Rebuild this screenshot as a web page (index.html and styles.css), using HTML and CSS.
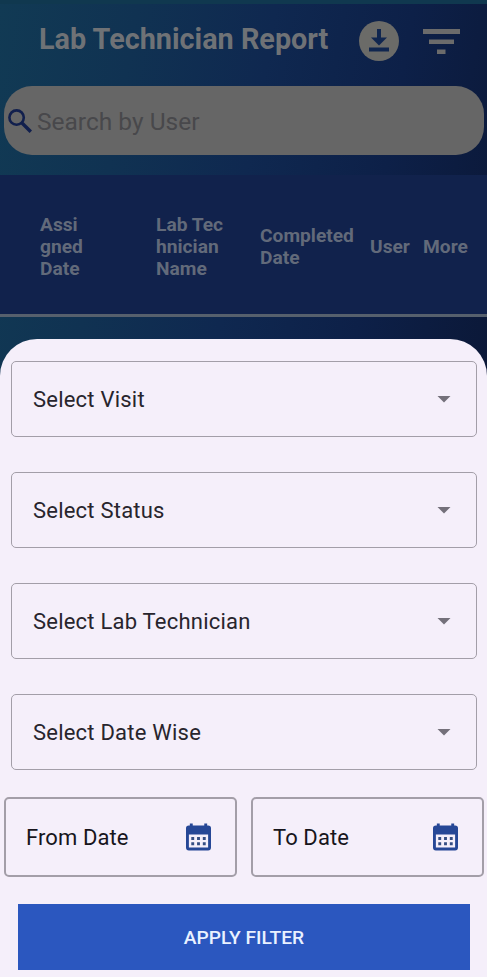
FILE: index.html
```html
<!DOCTYPE html>
<html lang="en">
<head>
<meta charset="utf-8">
<title>Lab Technician Report</title>
<link rel="stylesheet" href="styles.css">
</head>
<body>
<div class="app">
  <header class="header">
    <h1 class="title"><span>Lab Technician Report</span></h1>
    <svg class="download" viewBox="0 0 40 40"><circle cx="20" cy="20" r="20" fill="#6b6b68"/><path d="M18 8h4v8.500h6L20 24.500 12 16.500h6zM10 26.500h20v4H10z" fill="#10264f"/></svg>
    <svg class="filter" viewBox="0 0 37 26"><path d="M0 0h37v5H0zM6 10.500h25v4.500H6zM14 20.500h8.500v4.500H14z" fill="#6b6b6b"/></svg>
  </header>
  <div class="search">
    <svg class="lens" viewBox="0 0 24 24"><circle cx="8.600" cy="8.600" r="7.200" fill="none" stroke="#111f4d" stroke-width="2.600"/><path d="M14 14l8.800 8.800" stroke="#111f4d" stroke-width="3.400"/></svg>
    <span class="placeholder">Search by User</span>
  </div>
  <div class="table-head">
    <span>Assi<br>gned<br>Date</span>
    <span>Lab Tec<br>hnician<br>Name</span>
    <span>Completed<br>Date</span>
    <span>User</span>
    <span>More</span>
  </div>
  <main class="sheet">
    <div class="selects">
      <div class="select"><span>Select Visit</span><i class="caret"></i></div>
      <div class="select"><span>Select Status</span><i class="caret"></i></div>
      <div class="select"><span>Select Lab Technician</span><i class="caret"></i></div>
      <div class="select"><span>Select Date Wise</span><i class="caret"></i></div>
    </div>
    <div class="dates">
      <div class="date"><span>From Date</span>
        <svg class="calendar" viewBox="0 0 26 28"><path fill-rule="evenodd" fill="#264796" d="M4 0h3v2h12V0h3v2h1a3 3 0 0 1 3 3v20a3 3 0 0 1-3 3H3a3 3 0 0 1-3-3V5a3 3 0 0 1 3-3h1zM3 11.500V25h20V11.500z"/><path fill="#354d83" d="M5.500 14h3v3h-3zm6 0h3v3h-3zm6 0h3v3h-3zM5.500 19.500h3v3h-3zm6 0h3v3h-3zm6 0h3v3h-3z"/></svg>
      </div>
      <div class="date"><span>To Date</span>
        <svg class="calendar" viewBox="0 0 26 28"><path fill-rule="evenodd" fill="#264796" d="M4 0h3v2h12V0h3v2h1a3 3 0 0 1 3 3v20a3 3 0 0 1-3 3H3a3 3 0 0 1-3-3V5a3 3 0 0 1 3-3h1zM3 11.500V25h20V11.500z"/><path fill="#354d83" d="M5.500 14h3v3h-3zm6 0h3v3h-3zm6 0h3v3h-3zM5.500 19.500h3v3h-3zm6 0h3v3h-3zm6 0h3v3h-3z"/></svg>
      </div>
    </div>
    <button class="apply">APPLY FILTER</button>
  </main>
</div>
</body>
</html>
```
FILE: styles.css
```css
* { box-sizing: border-box; }
body { margin: 0; font-family: Roboto, "Liberation Sans", sans-serif; }
svg { display: block; flex: none; }
.app {
  height: 977px;
  display: flex;
  flex-direction: column;
  overflow: hidden;
  border-top: 4px solid #10384f;
  background: linear-gradient(100deg, #113a54 0%, #103252 25%, #0f2850 50%, #0d2048 75%, #0b1838 100%) 0 0 / 100% 373px no-repeat;
}
.header {
  height: 82px;
  flex: none;
  display: flex;
  align-items: flex-start;
  padding: 18px 27px 0 39px;
}
.title {
  flex: 1;
  margin: 0;
  font-size: 28.800px;
  line-height: 34px;
  font-weight: 700;
  color: #6f7276;
  white-space: nowrap;
}
.download { width: 40px; height: 40px; margin: -1px 24px 0 0; }
.filter { width: 37px; height: 26px; margin-top: 7px; }
.search {
  flex: none;
  display: flex;
  align-items: center;
  height: 69px;
  margin: 0 3px 20px 4px;
  padding-left: 4px;
  border-radius: 28px;
  background: #666;
}
.lens { width: 24px; height: 24px; }
.placeholder { margin: 2px 0 0 5px; font-size: 24.500px; color: #48484b; }
.table-head {
  flex: none;
  height: 142px;
  display: grid;
  grid-template-columns: 116px 104px 110px 53px 1fr;
  align-items: center;
  padding: 5px 0 0 40px;
  border-bottom: 3px solid #56606d;
  background: #11224c;
  color: #626a7a;
  font-size: 19.200px;
  line-height: 22.300px;
  font-weight: 700;
}
.sheet {
  flex: 1;
  margin-top: 22px;
  padding: 22px 3px 0 4px;
  border-radius: 37px 37px 0 0;
  background: #f5effa;
}
.selects {
  display: flex;
  flex-direction: column;
  gap: 35px;
  padding: 0 7px;
}
.select, .date {
  display: flex;
  align-items: center;
  justify-content: space-between;
  border: 1.500px solid #a39ea8;
  border-radius: 5px;
  font-size: 22px;
}
.select { height: 76px; padding: 0 25px 0 21px; color: #28252d; letter-spacing: .220px; }
.caret { width: 14px; height: 7px; background: #74707a; clip-path: polygon(0 0, 100% 0, 50% 100%); }
.dates { display: grid; grid-template-columns: 233px 233px; gap: 14px; margin-top: 27px; }
.date { height: 80px; padding: 0 24px 0 20px; border-width: 2px; color: #17151c; letter-spacing: .100px; }
.calendar { width: 25px; height: 28px; }
.apply {
  display: block;
  width: 452px;
  height: 66px;
  margin: 27px 0 0 14px;
  padding: 0;
  border: 0;
  background: #2b57bf;
  color: #e9f1ff;
  font: 500 19.200px Roboto, "Liberation Sans", sans-serif;
}
```
